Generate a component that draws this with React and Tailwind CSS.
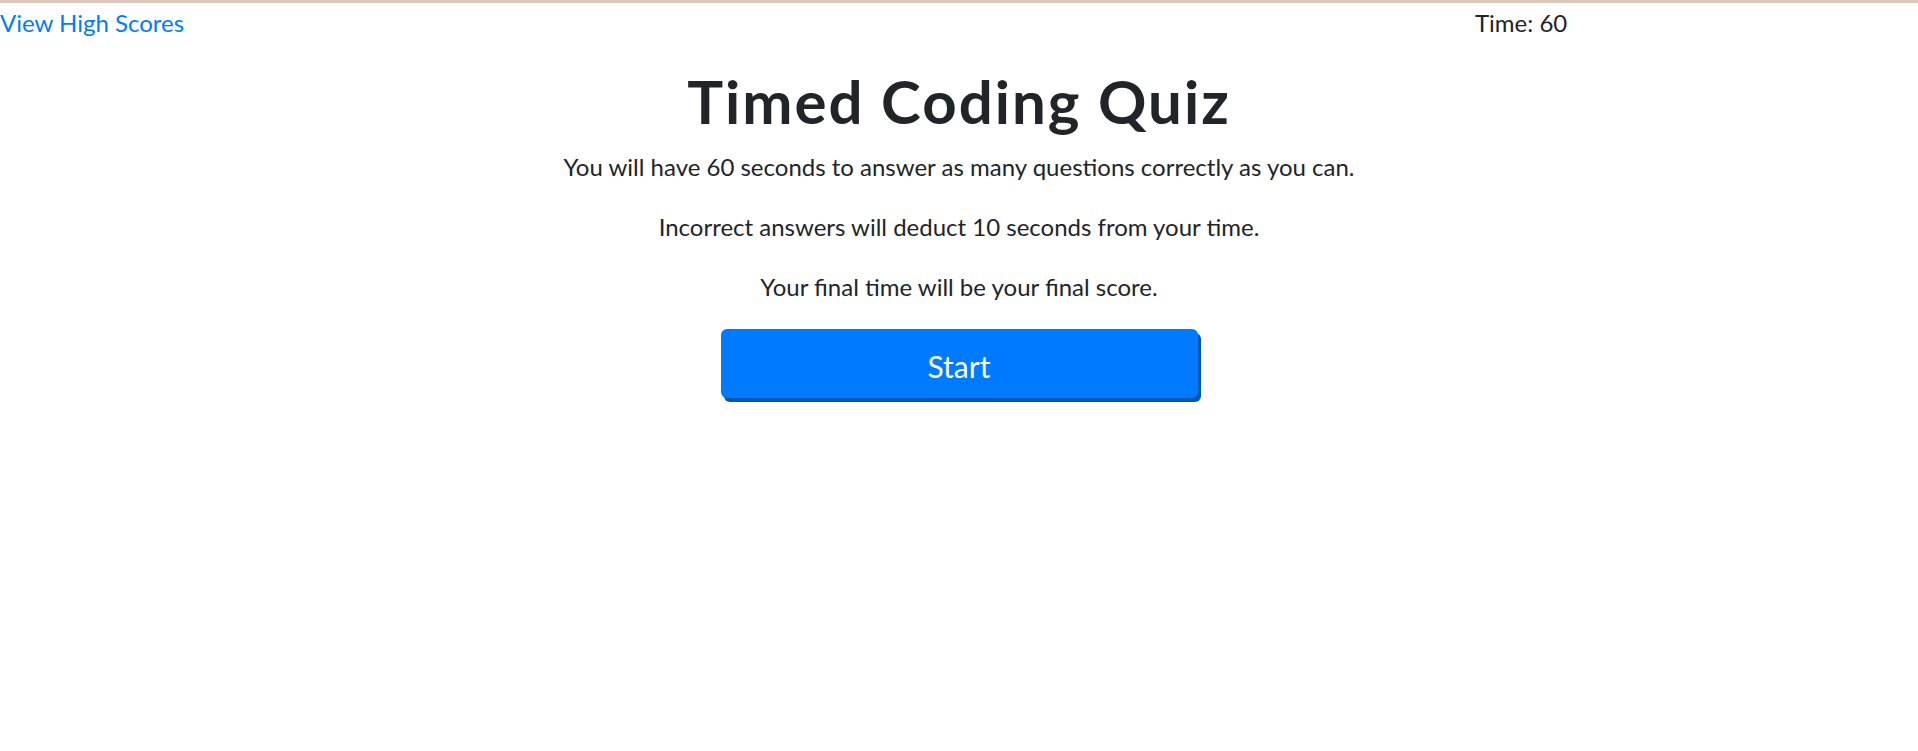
export default function App() {
  return (
    <div className="min-h-screen bg-white border-t-[3px] border-[#dcc6bf] font-['Lato','Liberation_Sans',sans-serif] text-[#212529]">
      <header className="grid grid-cols-[1475px_1fr] pt-[2px] text-[24px] leading-[36px]">
        <a href="#" className="text-[#007bff]">View High Scores</a>
        <span>Time: 60</span>
      </header>

      <main className="flex flex-col items-center text-center">
        <h1 className="mt-[24px] mb-[12px] text-[60px] leading-[72px] font-bold tracking-[2px]">Timed Coding Quiz</h1>
        <p className="mb-[24px] text-[24px] leading-[36px]">
          You will have 60 seconds to answer as many questions correctly as you can.
        </p>
        <p className="mb-[24px] text-[24px] leading-[36px]">Incorrect answers will deduct 10 seconds from your time.</p>
        <p className="mb-[24px] text-[24px] leading-[36px]">Your final time will be your final score.</p>
        <button className="w-[477px] h-[69px] pt-[5px] rounded-[6px] bg-[#007bff] text-white text-[30px] leading-[45px] shadow-[3px_4px_0_#0056b3]">
          Start
        </button>
      </main>
    </div>
  );
}
